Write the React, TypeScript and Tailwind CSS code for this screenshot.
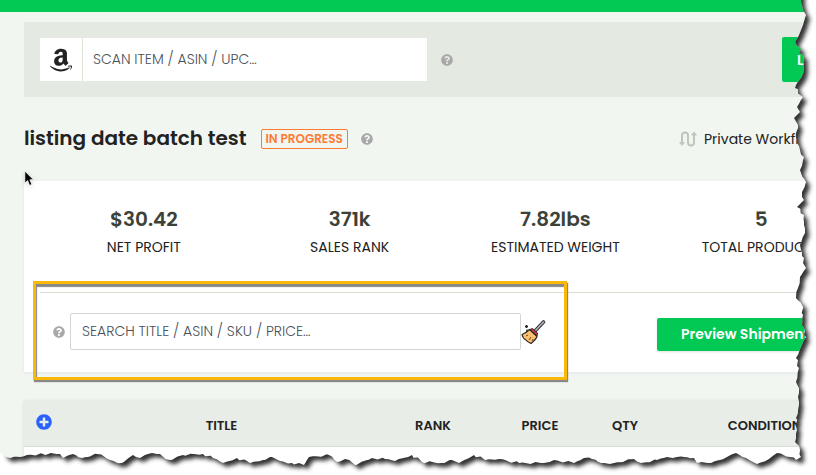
import { FaAmazon, FaPlusCircle, FaQuestionCircle } from "react-icons/fa";

type Point = [number, number];

const stats = [
    { value: "$30.42", label: "NET PROFIT" },
    { value: "371k", label: "SALES RANK" },
    { value: "7.82lbs", label: "ESTIMATED WEIGHT" },
    { value: "5", label: "TOTAL PRODUCTS" },
];

// Right edge top to bottom, then the bottom edge right to left
const tearPoints: Point[] = [
    [801, 0], [803, 10], [806, 15], [805, 18], [803, 25], [801, 30], [799, 35], [795, 42], [801, 48], [799, 53],
    [804, 58], [804, 68], [801, 78], [796, 85], [795, 88], [803, 97], [797, 107], [800, 112], [794, 118], [798, 125],
    [796, 133], [797, 143], [800, 150], [804, 157], [800, 170], [801, 173], [806, 182], [802, 192], [804, 200], [797, 207],
    [804, 215], [804, 225], [805, 233], [800, 245], [802, 256], [806, 268], [800, 277], [798, 288], [796, 298], [802, 305],
    [803, 315], [802, 325], [806, 337], [801, 347], [796, 358], [799, 368], [796, 382], [799, 393], [799, 405], [796, 418],
    [797, 430], [795, 442], [800, 450], [801, 457], [796, 460], [790, 457], [777, 453], [769, 459], [757, 464], [751, 461],
    [746, 458], [736, 453], [727, 457], [711, 463], [697, 463], [694, 458], [684, 457], [677, 457], [667, 457], [657, 460],
    [641, 463], [634, 459], [614, 463], [601, 463], [592, 459], [584, 458], [574, 463], [554, 460], [544, 463], [519, 463],
    [499, 459], [485, 460], [474, 455], [459, 463], [452, 460], [442, 463], [422, 462], [412, 455], [395, 461], [385, 459],
    [372, 458], [355, 465], [345, 459], [337, 462], [329, 455], [309, 457], [304, 465], [292, 463], [280, 461], [272, 457],
    [263, 460], [250, 463], [237, 458], [223, 463], [213, 458], [203, 454], [183, 455], [170, 460], [160, 454], [148, 454],
    [140, 458], [133, 455], [122, 463], [110, 460], [97, 454], [82, 458], [73, 454], [63, 458], [60, 454], [43, 454],
    [27, 455], [20, 457], [10, 458], [3, 453],
];

// Break every segment into short uneven steps so the paper looks ragged
function roughen(points: Point[]) {
    const out: Point[] = [];
    points.forEach(([x, y], i) => {
        out.push([x, y]);
        const next = points[i + 1];
        if (!next) return;
        const steps = Math.floor(Math.hypot(next[0] - x, next[1] - y) / 3);
        for (let s = 1; s < steps; s++) {
            const t = s / steps;
            const jag = (((i * 7 + s * 11) % 5) - 2) * 0.5;
            out.push([x + (next[0] - x) * t + jag, y + (next[1] - y) * t - jag]);
        }
    });
    return out.map(([x, y]) => `${x.toFixed(1)} ${y.toFixed(1)}`).join("L");
}

const edge = roughen(tearPoints);

function TornEdge() {
    return (
        <svg
            aria-hidden="true"
            viewBox="0 0 816 475"
            preserveAspectRatio="none"
            className="pointer-events-none absolute inset-0 z-20 h-full w-full"
        >
            <defs>
                <clipPath id="outside">
                    <path d={`M830 -10L801 -10L${edge}L-10 453L-10 490L830 490Z`} />
                </clipPath>
                <filter id="soft" x="-5%" y="-5%" width="110%" height="110%">
                    <feGaussianBlur stdDeviation="2" />
                </filter>
            </defs>
            <g clipPath="url(#outside)">
                <rect width="816" height="475" fill="#fff" />
                <path d={`M8 -10L801 -10L${edge}Z`} fill="#303030" filter="url(#soft)" transform="translate(4 4)" />
            </g>
        </svg>
    );
}

function HelpButton({ label }: { label: string }) {
    return (
        <button type="button" aria-label={label} className="text-[#a8a8a8]">
            <FaQuestionCircle className="h-3 w-3" />
        </button>
    );
}

function WorkflowIcon() {
    return (
        <svg viewBox="0 0 18 16" className="h-4 w-[18px]" fill="none" stroke="#bfc7bb" strokeWidth="2">
            <path d="M3 13V4.500a3 3 0 0 1 6 0V11.500a3 3 0 0 0 6 0V3" />
            <path d="M0.500 11.500H5.500L3 14.500Z" fill="#bfc7bb" strokeWidth="0.800" />
            <path d="M12.500 4H17.500L15 1Z" fill="#bfc7bb" strokeWidth="0.800" />
        </svg>
    );
}

function BroomIcon() {
    return (
        <svg viewBox="0 0 26 26" className="h-[26px] w-[26px]">
            <path d="M14 12L22.500 3" stroke="#3a3a40" strokeWidth="3.600" strokeLinecap="round" />
            <path d="M14 12L22.500 3" stroke="#b4b4bc" strokeWidth="1.500" strokeLinecap="round" />
            <path d="M8.500 10.500L16 17.500C15 20 13 22 10 24.500C8 23.500 6.500 23 5 21C3 20 1.500 18 1 15.500C4 14.500 6 13 8.500 10.500Z" fill="#fbc170" stroke="#2b2623" strokeWidth="1.200" strokeLinejoin="round" />
            <path d="M9 10.500L11.500 9.500L16.500 14L16 17Z" fill="#c13a4b" stroke="#2b2623" strokeWidth="1" strokeLinejoin="round" />
            <path d="M5 17L7 16M8 21L10 18M11 22L12 20" stroke="#5a3c20" strokeWidth="0.900" />
            <path d="M5.500 6V9M4 7.500H7M6 10.500V13" stroke="#26262b" strokeWidth="1.500" />
        </svg>
    );
}

function Cursor() {
    return (
        <svg
            aria-hidden="true"
            viewBox="0 0 12 18"
            className="pointer-events-none absolute top-[170px] left-6 z-10 h-[18px] w-3 drop-shadow-sm"
        >
            <path d="M0.800 1V13.200L3.600 10.600L5.600 15.400L7.900 14.400L5.900 9.800H9.500Z" fill="#000" stroke="#fff" strokeWidth="0.800" />
        </svg>
    );
}

export default function App() {
    return (
        <div className="relative overflow-hidden bg-[#f1f6f1] font-['Poppins','Inter',sans-serif] text-[#222]">
            <div className="h-3 bg-[#02c954]" />

            <main className="w-[calc(100%+64px)] pt-[10px] pl-6">
                {/* Scan bar */}
                <form className="flex items-center bg-[#e4e9e2] p-4" onSubmit={(e) => e.preventDefault()}>
                    <div className="flex h-[43px] w-[387px] bg-white">
                        <span className="flex w-[43px] items-center justify-center border-r border-[#dfe4d8]">
                            <FaAmazon className="h-[26px] w-[26px]" />
                        </span>
                        <input
                            aria-label="Scan item"
                            placeholder="SCAN ITEM / ASIN / UPC…"
                            className="min-w-0 flex-1 px-[10px] pb-[2px] text-sm outline-none placeholder:font-light placeholder:text-[#495057]"
                        />
                    </div>
                    <div className="ml-[14px] flex">
                        <HelpButton label="Scan help" />
                    </div>
                    <button type="submit" className="-my-px ml-auto h-[45px] w-[82px] rounded-xs bg-[#02c954] px-[15px] text-left text-sm font-semibold text-white">
                        LIST
                    </button>
                </form>

                {/* Batch title */}
                <div className="flex h-[84px] items-center pr-4">
                    <h1 className="pb-[2px] text-xl font-semibold">listing date batch test</h1>
                    <span className="ml-[14px] rounded-xs border border-[#ff7a33] px-1 text-xs leading-[18px] font-semibold text-[#ff7a33]">
                        IN PROGRESS
                    </span>
                    <div className="ml-[13px] flex">
                        <HelpButton label="Status help" />
                    </div>
                    <div className="ml-auto flex w-[185px] items-center gap-[7px] text-sm">
                        <WorkflowIcon />
                        <span>Private Workflow</span>
                    </div>
                </div>

                {/* Summary card */}
                <section className="bg-white px-4 shadow-[0_1px_3px_#dfe5e6]">
                    <dl className="grid h-[111px] grid-cols-4 pt-6 pl-px text-center">
                        {stats.map((stat) => (
                            <div key={stat.label} className="flex flex-col-reverse justify-end">
                                <dt className="text-sm leading-[29px]">{stat.label}</dt>
                                <dd className="text-xl leading-7 font-semibold text-[#3c4238]">{stat.value}</dd>
                            </div>
                        ))}
                    </dl>
                    <div className="relative flex h-20 items-center border-t border-[#d5dfd2] pb-[2px] pl-[13px]">
                        <div className="flex">
                            <HelpButton label="Search help" />
                        </div>
                        <input
                            type="search"
                            aria-label="Search batch"
                            placeholder="SEARCH TITLE / ASIN / SKU / PRICE…"
                            className="ml-[5px] h-[37px] w-[451px] rounded-xs border border-[#d2d6d2] px-[11px] text-sm outline-none placeholder:font-light placeholder:text-[#495057]"
                        />
                        <button type="button" aria-label="Clear search">
                            <BroomIcon />
                        </button>
                        <button type="button" className="mt-[6px] ml-auto h-[33px] w-[207px] rounded-xs bg-[#02c954] px-6 pb-[2px] text-left text-sm font-semibold text-white shadow-sm">
                            Preview Shipments
                        </button>
                        <div className="pointer-events-none absolute -top-3 -left-[7px] h-[99px] w-[534px] border-[3px] border-[#fab90a] shadow-[1px_2px_1px_#888,inset_1px_3px_1px_#888]" />
                    </div>
                </section>

                {/* Product table */}
                <table className="mt-[29px] w-full table-fixed bg-white text-[13px] shadow-[0_0_3px_#d5dad4]">
                    <colgroup>
                        <col className="w-10" />
                        <col className="w-[315px]" />
                        <col className="w-[108px]" />
                        <col className="w-[106px]" />
                        <col className="w-16" />
                        <col />
                    </colgroup>
                    <thead>
                        <tr className="h-[45px] border-b border-[#d8ddd6] bg-[#e9ede8]">
                            <th className="pb-[2px]">
                                <button type="button" aria-label="Add product" className="flex w-full justify-center text-[#2962ff]">
                                    <FaPlusCircle className="h-4 w-4" />
                                </button>
                            </th>
                            <th className="pt-1 font-semibold">TITLE</th>
                            <th className="pt-1 font-semibold">RANK</th>
                            <th className="pt-1 font-semibold">PRICE</th>
                            <th className="pt-1 font-semibold">QTY</th>
                            <th className="pt-1 pr-2 font-semibold">CONDITION</th>
                        </tr>
                    </thead>
                    <tbody>
                        <tr className="h-[29px]">
                            <td colSpan={6} />
                        </tr>
                    </tbody>
                </table>
            </main>
            <Cursor />
            <TornEdge />
        </div>
    );
}
